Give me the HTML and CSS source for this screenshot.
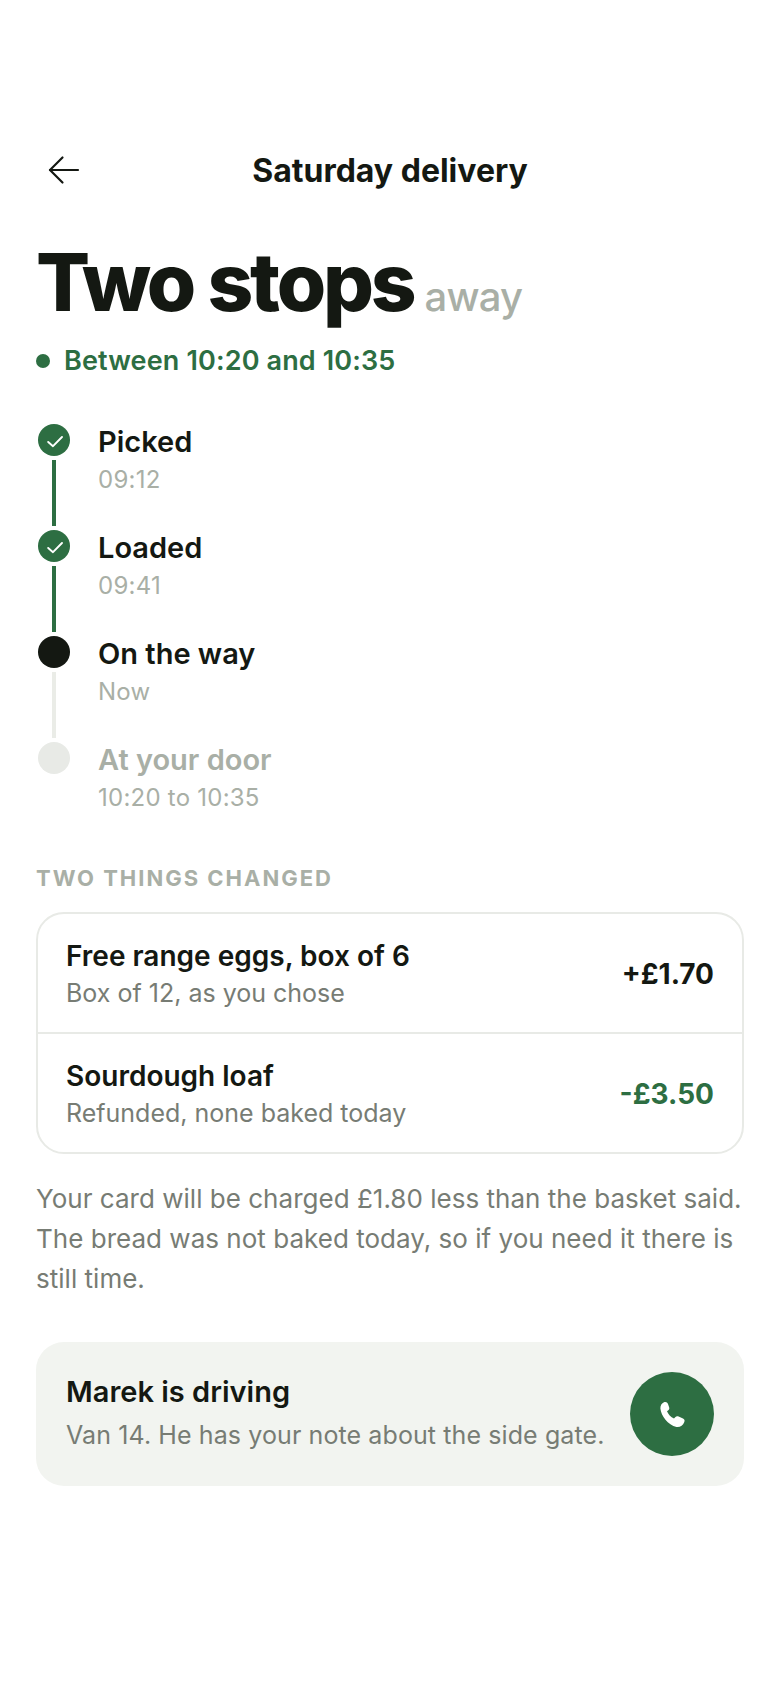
FILE: index.html
```html
<!DOCTYPE html>
<html lang="en">
<head>
    <meta charset="UTF-8">
    <meta name="viewport" content="width=device-width, initial-scale=1.0">
    <title>Saturday delivery</title>
    <link rel="stylesheet" href="styles.css">
</head>
<body>
    <div class="screen">
        <header class="topbar">
            <svg class="back" width="36" height="36" viewBox="0 0 36 36" fill="none" stroke="#141812" stroke-width="2.2" stroke-linecap="round" stroke-linejoin="round">
                <path d="M31 18H3"/>
                <path d="M15.5 5.5L3 18L15.5 30.5"/>
            </svg>
            <div class="topbar-title">Saturday delivery</div>
        </header>

        <h1 class="headline">Two stops<span class="headline-sub">away</span></h1>
        <div class="eta"><span class="eta-dot"></span>Between 10:20 and 10:35</div>

        <ul class="steps">
            <li class="step done">
                <div class="rail">
                    <span class="dot">
                        <svg width="18" height="18" viewBox="0 0 18 18" fill="none" stroke="#fff" stroke-width="1.9" stroke-linecap="round" stroke-linejoin="round"><path d="M3.2 11L8 15.2L17 6"/></svg>
                    </span>
                    <span class="line"></span>
                </div>
                <div class="step-text">
                    <div class="step-name">Picked</div>
                    <div class="step-time">09:12</div>
                </div>
            </li>
            <li class="step done">
                <div class="rail">
                    <span class="dot">
                        <svg width="18" height="18" viewBox="0 0 18 18" fill="none" stroke="#fff" stroke-width="1.9" stroke-linecap="round" stroke-linejoin="round"><path d="M3.2 11L8 15.2L17 6"/></svg>
                    </span>
                    <span class="line"></span>
                </div>
                <div class="step-text">
                    <div class="step-name">Loaded</div>
                    <div class="step-time">09:41</div>
                </div>
            </li>
            <li class="step current">
                <div class="rail">
                    <span class="dot"></span>
                    <span class="line"></span>
                </div>
                <div class="step-text">
                    <div class="step-name">On the way</div>
                    <div class="step-time">Now</div>
                </div>
            </li>
            <li class="step todo">
                <div class="rail">
                    <span class="dot"></span>
                </div>
                <div class="step-text">
                    <div class="step-name">At your door</div>
                    <div class="step-time">10:20 to 10:35</div>
                </div>
            </li>
        </ul>

        <h2 class="section-label">TWO THINGS CHANGED</h2>
        <div class="changes">
            <div class="change">
                <div>
                    <div class="change-name">Free range eggs, box of 6</div>
                    <div class="change-note">Box of 12, as you chose</div>
                </div>
                <div class="change-price">+£1.70</div>
            </div>
            <div class="change">
                <div>
                    <div class="change-name">Sourdough loaf</div>
                    <div class="change-note">Refunded, none baked today</div>
                </div>
                <div class="change-price refund">-£3.50</div>
            </div>
        </div>

        <p class="summary">Your card will be charged £1.80 less than the basket said. The bread was not baked today, so if you need it there is still time.</p>

        <div class="driver">
            <div class="driver-text">
                <div class="driver-name">Marek is driving</div>
                <div class="driver-note">Van 14. He has your note about the side gate.</div>
            </div>
            <button class="call" aria-label="Call Marek">
                <svg width="28" height="28" viewBox="0 0 28 28" fill="#fff"><path d="M6 2.2C8 1.5 9.5 2.5 10 4L11.2 7.5C11.6 8.8 11 9.8 10 10.5L9 11.2C10 14 12.8 17 16 18.4L17.2 17.2C18.2 16.2 19.4 16 20.6 16.6L25 18.6C26.6 19.4 27 20.8 26.2 22.3C25 25.5 22 27.5 18.5 27C10 25 3 16 2.4 8.5C2.2 5.5 3.8 3 6 2.2Z"/></svg>
            </button>
        </div>
    </div>
</body>
</html>
```

FILE: styles.css
```css
* {
    box-sizing: border-box;
}
body {
    margin: 0;
    background-color: #fff;
    color: #141812;
    font-family: 'Inter', sans-serif;
}
.screen {
    width: 780px;
    height: 1688px;
    padding: 150px 36px 0;
}
.topbar {
    display: flex;
    align-items: center;
    justify-content: center;
    height: 40px;
    position: relative;
}
.back {
    position: absolute;
    left: 11px;
    top: 2px;
}
.topbar-title {
    font-size: 32px;
    font-weight: 700;
}
.headline {
    margin: 48px 0 0;
    font-size: 80px;
    line-height: 88px;
    font-weight: 800;
    letter-spacing: -3.2px;
}
.headline-sub {
    margin-left: 11px;
    font-size: 40px;
    font-weight: 500;
    letter-spacing: -0.8px;
    color: #a9afa6;
}
.eta {
    display: flex;
    align-items: center;
    gap: 14px;
    margin-top: 2px;
    font-size: 27px;
    line-height: 36px;
    font-weight: 600;
    letter-spacing: 0.14px;
    color: #2d6e42;
}
.eta-dot {
    width: 14px;
    height: 14px;
    border-radius: 50%;
    background-color: #2d6e42;
}
.steps {
    list-style: none;
    margin: 45px 0 0;
    padding: 0 0 0 2px;
}
.step {
    display: flex;
    gap: 28px;
    height: 106px;
}
.step.todo {
    height: 84px;
}
.rail {
    display: flex;
    flex-direction: column;
    align-items: center;
    gap: 4px;
    width: 32px;
}
.dot {
    display: flex;
    align-items: center;
    justify-content: center;
    flex: none;
    width: 32px;
    height: 32px;
    border-radius: 50%;
}
.line {
    width: 4px;
    height: 66px;
}
.done .dot, .done .line {
    background-color: #2d6e42;
}
.current .dot {
    background-color: #141812;
}
.current .line {
    background-color: #eaece7;
}
.todo .dot {
    background-color: #e8eae6;
}
.step-name {
    font-size: 29px;
    line-height: 36px;
    font-weight: 600;
}
.step-time {
    margin-top: 2px;
    font-size: 24px;
    line-height: 36px;
    letter-spacing: 0.24px;
    color: #a9afa6;
}
.todo .step-name {
    color: #a9afa6;
}
.section-label {
    margin: 37px 0 0;
    font-size: 22px;
    line-height: 30px;
    font-weight: 700;
    letter-spacing: 2px;
    color: #a9afa6;
}
.changes {
    margin-top: 19px;
    border: 2px solid #e8eae6;
    border-radius: 28px;
}
.change {
    display: flex;
    align-items: center;
    justify-content: space-between;
    height: 118px;
    padding: 2px 28px 0;
}
.change + .change {
    border-top: 2px solid #e8eae6;
    height: 120px;
}
.change-name {
    font-size: 28px;
    line-height: 36px;
    font-weight: 600;
}
.change-note {
    margin-top: 1px;
    font-size: 25px;
    line-height: 36px;
    color: #777c74;
}
.change-price {
    font-size: 28px;
    font-weight: 700;
}
.refund {
    color: #2d6e42;
}
.summary {
    margin: 25px 0 0;
    font-size: 26px;
    line-height: 40px;
    letter-spacing: 0.02px;
    color: #777c74;
}
.driver {
    display: flex;
    align-items: center;
    justify-content: space-between;
    height: 144px;
    margin-top: 43px;
    padding: 0 30px;
    border-radius: 28px;
    background-color: #f2f4f0;
}
.driver-text {
    margin-bottom: 2px;
}
.driver-name {
    font-size: 29px;
    line-height: 38px;
    font-weight: 600;
}
.driver-note {
    margin-top: 6px;
    font-size: 25px;
    line-height: 36px;
    letter-spacing: 0.1px;
    color: #777c74;
}
.call {
    display: flex;
    align-items: center;
    justify-content: center;
    flex: none;
    width: 84px;
    height: 84px;
    padding: 0;
    border: none;
    border-radius: 50%;
    background-color: #2d6e42;
}
```
